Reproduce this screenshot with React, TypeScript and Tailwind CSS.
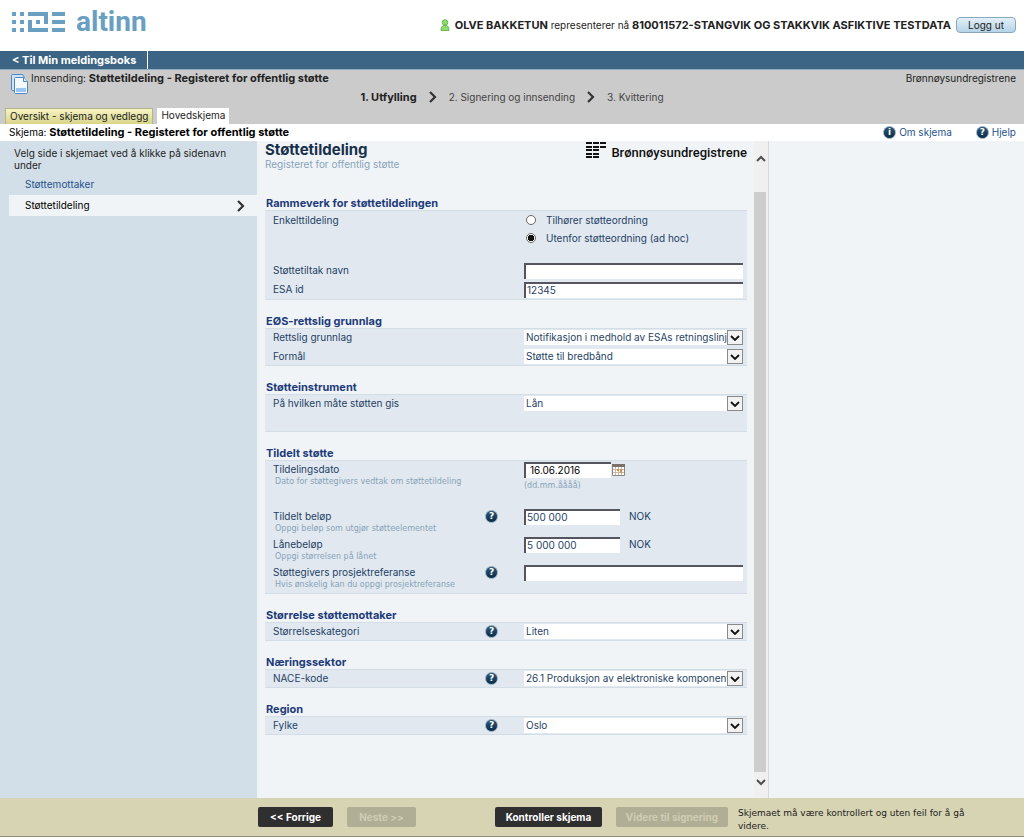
import { useState, type ReactNode } from "react";
import clsx from "clsx";

const steps = ["1. Utfylling", "2. Signering og innsending", "3. Kvittering"];

const Chevron = ({ className }: { className?: string }) => (
  <svg viewBox="0 0 8 12" className={clsx("h-3 w-2 shrink-0", className)} fill="none" stroke="#333" strokeWidth="2.2">
    <path d="M1 1l5 5-5 5" />
  </svg>
);

const RoundIcon = ({ sign }: { sign: "i" | "?" }) => (
  <span className="flex h-[13px] w-[13px] shrink-0 items-center justify-center rounded-full border border-[#8fa9bd] bg-linear-to-b from-[#2d5878] to-[#0c2c48] font-['DejaVu_Sans',sans-serif] text-[9px] leading-none font-bold text-white">
    {sign}
  </span>
);

const AltinnLogo = () => (
  <svg viewBox="0 0 54 20" className="h-5 w-[54px]" fill="#6a9fc2">
    <path d="M0 0h4v4H0zM0 8h4v4H0zM0 16h4v4H0zM8 0h4v4H8zM8 8h4v4H8zM8 16h4v4H8z" />
    <path d="M16 0h20v12h-4V4H16zM16 8h4v8h16v4H16zM24 8h4v4h-4z" />
    <path d="M40 0h13v4H40zM40 8h13v4H40zM40 16h13v4H40z" />
  </svg>
);

const BrregLogo = () => (
  <svg viewBox="0 0 20 16" className="h-4 w-5" fill="#111">
    <path d="M0 0h6v2H0zM0 4h6v2H0zM0 7h6v2H0zM0 11h6v2H0zM0 14h6v2H0z" />
    <path d="M7 0h6v2H7zM7 4h6v2H7zM7 7h6v2H7zM7 11h6v2H7zM7 14h6v2H7z" />
    <path d="M14 0h6v2h-6zM14 4h6v2h-6z" />
  </svg>
);

const DocumentIcon = () => (
  <svg viewBox="0 0 17 20" className="h-5 w-[17px]" stroke="#4f86c6" strokeLinejoin="round">
    <path d="M.5 1.500q0-1 1-1h10l2 3v13h-12q-1 0-1-1z" fill="#cfe3f8" />
    <path d="M3.500 4.500q0-1 1-1h8l4 4v11q0 1-1 1h-11q-1 0-1-1z" fill="#f3f9ff" />
    <path d="M5 14h10v4H5z" fill="#9cc6f0" stroke="none" />
    <path d="M12.500 3.500v4h4" fill="#dcebfa" />
  </svg>
);

const PersonIcon = () => (
  <svg viewBox="0 0 10 12" className="h-3 w-[10px]" fill="#8fdc6c" stroke="#5da83f" strokeWidth=".8">
    <path d="M1 11.500c0-3 1-4.500 2.500-5h3C8 7 9 8.500 9 11.500z" />
    <circle cx="5" cy="3.500" r="2.800" />
  </svg>
);

const CalendarIcon = () => (
  <svg viewBox="0 0 13 12" className="h-3 w-[13px]">
    <path d="M.5.5h12v11H.5z" fill="#fff" stroke="#8c8580" />
    <path d="M0 0h13v3H0z" fill="#7b706a" />
    <path d="M3.500 3v8M6.500 3v8M9.500 3v8M1 5.500h11M1 8.500h11" stroke="#c9b9a8" />
    <path d="M5 5h2v2H5zM8 5h2v4H8z" fill="#e08a50" />
  </svg>
);

const inset =
  "h-4 border-t-2 border-l-2 border-[#55555f] bg-white pb-0.5 text-[10px] leading-3 outline-none";

type RowProps = {
  id?: string;
  label: string;
  hint?: string;
  help?: boolean;
  className?: string;
  children: ReactNode;
};

const Row = ({ id, label, hint, help, className = "h-[19px]", children }: RowProps) => (
  <div className={clsx("flex items-start", className)}>
    <div className="flex-1">
      <label htmlFor={id} className="block leading-[18px]">
        {label}
      </label>
      {hint && (
        <p className="pl-0.5 font-['DejaVu_Sans',sans-serif] text-[8px] leading-[8px] text-[#87a3ba]">{hint}</p>
      )}
    </div>
    <div className="flex h-[19px] w-[39px] items-center">
      {help && (
        <button type="button" aria-label={`Hjelp: ${label}`}>
          <RoundIcon sign="?" />
        </button>
      )}
    </div>
    <div className="flex min-h-[19px] w-[219px] items-center">{children}</div>
  </div>
);

const Select = ({ id, value }: { id: string; value: string }) => (
  <div className="relative w-full">
    <select
      id={id}
      className="block h-[15px] w-full appearance-none overflow-hidden bg-white pr-4 pl-[2px] text-[10px] leading-[15px] outline-none"
    >
      <option>{value}</option>
    </select>
    <span className="pointer-events-none absolute top-0 right-0 flex h-[15px] w-4 items-center justify-center border border-[#8a8a8a] bg-[#f2f2f2]">
      <svg viewBox="0 0 10 6" className="h-[6px] w-[10px]" fill="none" stroke="#111" strokeWidth="1.800">
        <path d="M1 1l4 4 4-4" />
      </svg>
    </span>
  </div>
);

const Section = ({ title, className, children }: { title: string; className?: string; children: ReactNode }) => (
  <section className="mb-[14px]">
    <h2 className="pl-px text-[11px] leading-[14px] font-bold text-[#1d3b7a]">{title}</h2>
    <div className={clsx("border-y border-[#d3dde6] bg-[#e1e8ef] pr-1 pl-2", className)}>
      <div className="-my-px">{children}</div>
    </div>
  </section>
);

const Radio = ({ label, checked, onChange }: { label: string; checked: boolean; onChange: () => void }) => (
  <label className="flex h-[18px] items-center gap-[10px] pl-0.5">
    <input
      type="radio"
      name="enkelttildeling"
      checked={checked}
      onChange={onChange}
      className="h-[10px] w-[10px] appearance-none rounded-full border border-[#666] bg-white checked:bg-[radial-gradient(circle,#111_0_3px,#fff_3px)]"
    />
    {label}
  </label>
);

const footerButton = "h-5 rounded-xs text-[10px] font-bold";

const App = () => {
  const [scheme, setScheme] = useState("utenfor");

  return (
    <div className="flex min-h-screen flex-col bg-white font-[Inter,Verdana,sans-serif] text-[10px] text-[#222]">
      <header className="flex h-[51px] items-start justify-between pr-2 pl-3">
        <a href="#" className="flex items-start gap-[10px] pt-3" aria-label="altinn">
          <AltinnLogo />
          <span className="font-[Roboto,sans-serif] text-[28px] leading-5 font-bold text-[#6a9fc2]">altinn</span>
        </a>
        <div className="flex items-center gap-[5px] pt-[17px]">
          <PersonIcon />
          <p>
            <b className="text-[11px]">OLVE BAKKETUN</b> representerer nå{" "}
            <b className="text-[11px]">810011572-STANGVIK OG STAKKVIK ASFIKTIVE TESTDATA</b>
          </p>
          <button
            type="button"
            className="h-4 w-[60px] rounded-sm border border-[#8ba7ba] bg-linear-to-b from-[#e3f0f9] to-[#b5d3e7] leading-[14px]"
          >
            Logg ut
          </button>
        </div>
      </header>

      <nav className="flex h-[19px] border-b border-[#8dacc0] bg-[#3b6485]">
        <a href="#" className="border-r border-white pr-[11px] pl-3 text-[11px] leading-[18px] font-bold text-white">
          &lt; Til Min meldingsboks
        </a>
      </nav>

      <div className="relative flex h-[54px] flex-col justify-between bg-[#cbcbcb] pr-2 pl-[5px]">
        <div className="flex items-start justify-between">
          <div className="flex gap-[3px] pl-[6px]">
            <span className="pt-1">
              <DocumentIcon />
            </span>
            <p className="leading-4">
              Innsending: <b className="text-[11px]">Støttetildeling - Registeret for offentlig støtte</b>
            </p>
          </div>
          <p className="leading-4">Brønnøysundregistrene</p>
        </div>
        <ol className="absolute inset-x-0 top-5 flex items-center justify-center gap-3 leading-[14px] text-[#444]">
          {steps.map((step, i) => (
            <li key={step} className={clsx("flex items-center gap-3", i === 0 && "text-[11px] font-bold text-[#222]")}>
              {i > 0 && <Chevron />}
              {step}
            </li>
          ))}
        </ol>
        <div className="flex gap-1">
          <button
            type="button"
            className="h-4 border border-b-0 border-[#b5b58a] bg-linear-to-b from-[#f6f4c4] to-[#d8d488] px-1 pb-0.5 leading-3"
          >
            Oversikt - skjema og vedlegg
          </button>
          <button type="button" className="h-4 bg-white px-1 pb-0.5 leading-3">
            Hovedskjema
          </button>
        </div>
      </div>

      <div className="flex h-[17px] items-center justify-between pr-2 pl-[9px]">
        <p className="text-black">
          Skjema: <b className="text-[11px]">Støttetildeling - Registeret for offentlig støtte</b>
        </p>
        <div className="flex gap-6 text-[#26538c]">
          <a href="#" className="flex items-center gap-[3px]">
            <RoundIcon sign="i" />
            Om skjema
          </a>
          <a href="#" className="flex items-center gap-[3px]">
            <RoundIcon sign="?" />
            Hjelp
          </a>
        </div>
      </div>

      <main className="flex flex-1 bg-[#f0f4f7]">
        <aside className="w-[257px] shrink-0 bg-[#d2dfe8] pt-[6px] pl-[9px]">
          <p className="pr-5 pl-[5px] leading-3">Velg side i skjemaet ved å klikke på sidenavn under</p>
          <a href="#" className="mt-[3px] flex h-[21px] items-center pl-4 text-[#26538c]">
            Støttemottaker
          </a>
          <a href="#" className="flex h-[21px] items-center justify-between bg-[#f0f4f7] pr-3 pl-4 text-black">
            Støttetildeling
            <Chevron />
          </a>
        </aside>

        <form className="w-[497px] shrink-0 pr-[7px] pl-2 text-[#1f3f66]">
          <div className="flex h-[55px] items-start justify-between">
            <div>
              <h1 className="pt-px text-[15px] leading-4 font-bold text-[#17304c]">Støttetildeling</h1>
              <p className="leading-3 text-[#87a3ba]">Registeret for offentlig støtte</p>
            </div>
            <div className="flex items-start gap-[5px] pt-px">
              <BrregLogo />
              <span className="pt-[3px] font-[Roboto,sans-serif] text-[13px] leading-4 font-medium text-[#111]">
                Brønnøysundregistrene
              </span>
            </div>
          </div>

          <Section title="Rammeverk for støttetildelingen" className="h-[90px]">
            <Row label="Enkelttildeling" className="h-[51px] pt-px">
              <div>
                <Radio label="Tilhører støtteordning" checked={scheme === "tilhorer"} onChange={() => setScheme("tilhorer")} />
                <Radio label="Utenfor støtteordning (ad hoc)" checked={scheme === "utenfor"} onChange={() => setScheme("utenfor")} />
              </div>
            </Row>
            <Row id="navn" label="Støttetiltak navn">
              <input id="navn" className={clsx(inset, "w-full pl-px")} />
            </Row>
            <Row id="esa" label="ESA id">
              <input id="esa" defaultValue="12345" className={clsx(inset, "w-full pl-px")} />
            </Row>
          </Section>

          <Section title="EØS-rettslig grunnlag" className="h-[38px]">
            <Row id="grunnlag" label="Rettslig grunnlag">
              <Select id="grunnlag" value="Notifikasjon i medhold av ESAs retningslinjer" />
            </Row>
            <Row id="formal" label="Formål">
              <Select id="formal" value="Støtte til bredbånd" />
            </Row>
          </Section>

          <Section title="Støtteinstrument" className="h-[38px]">
            <Row id="instrument" label="På hvilken måte støtten gis">
              <Select id="instrument" value="Lån" />
            </Row>
          </Section>

          <Section title="Tildelt støtte" className="h-[134px]">
            <Row id="dato" label="Tildelingsdato" hint="Dato for støttegivers vedtak om støttetildeling" className="h-[47px]">
              <div className="pt-0.5">
                <div className="flex items-center gap-px">
                  <input id="dato" defaultValue="16.06.2016" className={clsx(inset, "w-[87px] pl-1 text-black")} />
                  <button type="button" aria-label="Velg dato">
                    <CalendarIcon />
                  </button>
                </div>
                <p className="font-['DejaVu_Sans',sans-serif] text-[8px] leading-4 text-[#87a3ba]">(dd.mm.åååå)</p>
              </div>
            </Row>
            <Row id="belop" label="Tildelt beløp" hint="Oppgi beløp som utgjør støtteelementet" help className="h-7">
              <input id="belop" defaultValue="500 000" className={clsx(inset, "w-24 pl-px")} />
              <span className="pl-[9px]">NOK</span>
            </Row>
            <Row id="lan" label="Lånebeløp" hint="Oppgi størrelsen på lånet" className="h-7">
              <input id="lan" defaultValue="5 000 000" className={clsx(inset, "w-24 pl-px")} />
              <span className="pl-[9px]">NOK</span>
            </Row>
            <Row id="referanse" label="Støttegivers prosjektreferanse" hint="Hvis ønskelig kan du oppgi prosjektreferanse" help className="h-7">
              <input id="referanse" className={clsx(inset, "w-full pl-px")} />
            </Row>
          </Section>

          <Section title="Størrelse støttemottaker" className="h-[19px]">
            <Row id="storrelse" label="Størrelseskategori" help>
              <Select id="storrelse" value="Liten" />
            </Row>
          </Section>

          <Section title="Næringssektor" className="h-[19px]">
            <Row id="nace" label="NACE-kode" help>
              <Select id="nace" value="26.1 Produksjon av elektroniske komponenter" />
            </Row>
          </Section>

          <Section title="Region" className="h-[19px]">
            <Row id="fylke" label="Fylke" help>
              <Select id="fylke" value="Oslo" />
            </Row>
          </Section>
        </form>

        <div className="flex w-[15px] shrink-0 flex-col border-r border-[#d5d9dd] bg-[#f0f0f0] pr-px">
          <button type="button" aria-label="Rull opp" className="flex h-[51px] items-start justify-center pt-[14px]">
            <svg viewBox="0 0 10 7" className="h-[7px] w-[10px]" fill="none" stroke="#505050" strokeWidth="2">
              <path d="M1 6l4-4 4 4" />
            </svg>
          </button>
          <div className="mr-px flex-1 bg-[#cdcdcd]" />
          <button type="button" aria-label="Rull ned" className="flex h-[26px] items-start justify-center pt-[7px]">
            <svg viewBox="0 0 10 7" className="h-[7px] w-[10px]" fill="none" stroke="#505050" strokeWidth="2">
              <path d="M1 1l4 4 4-4" />
            </svg>
          </button>
        </div>
      </main>

      <footer className="flex h-[39px] items-start border-b border-[#8f8d75] bg-[#d7d4b3] pt-[9px] pl-[258px]">
        <button type="button" className={clsx(footerButton, "w-[75px] bg-[#2f2f2f] text-white")}>
          &lt;&lt; Forrige
        </button>
        <button type="button" disabled className={clsx(footerButton, "ml-[14px] w-[69px] bg-[#b0ae94] text-[#d0cdb4]")}>
          Neste &gt;&gt;
        </button>
        <button type="button" className={clsx(footerButton, "ml-[79px] w-[107px] bg-[#2f2f2f] text-white")}>
          Kontroller skjema
        </button>
        <button type="button" disabled className={clsx(footerButton, "ml-[14px] w-[112px] bg-[#b0ae94] text-[#d0cdb4]")}>
          Videre til signering
        </button>
        <p className="ml-[10px] w-60 font-['DejaVu_Sans',sans-serif] text-[9px] leading-[13px]">
          Skjemaet må være kontrollert og uten feil for å gå videre.
        </p>
      </footer>
    </div>
  );
};

export default App;
